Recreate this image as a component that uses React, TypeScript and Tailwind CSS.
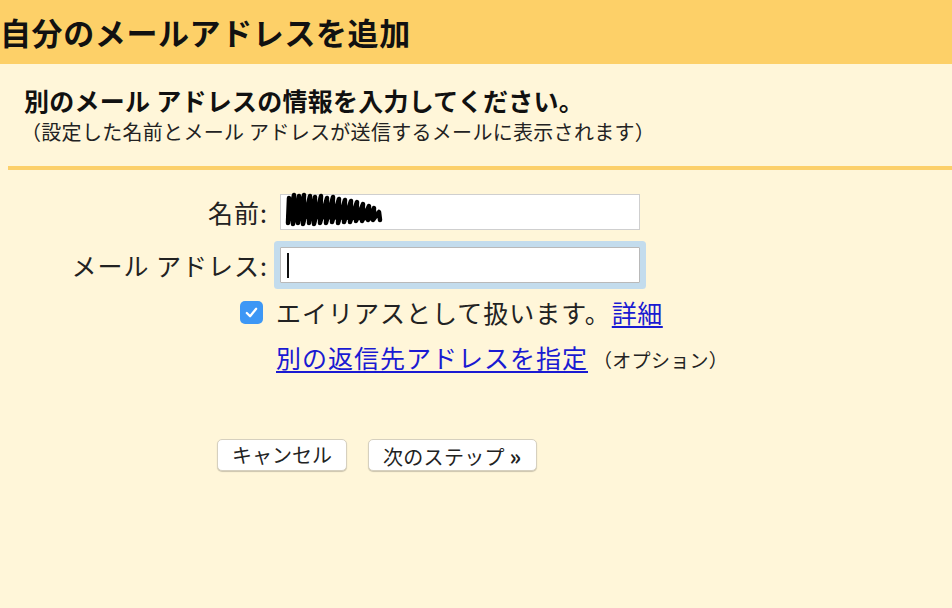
function Scribble() {
  return (
    <svg width="104" height="36" viewBox="0 0 104 36" className="absolute left-[3px] -top-[3px]">
      <path
        d="M5 6 L4 31 L10 3 L9 32 L15 4 L14 31 L20 3 L19 32 L26 4 L25 31 L31 5 L30 32 L37 4 L36 31 L43 6 L42 31 L49 5 L48 30 L55 7 L54 31 L61 8 L60 30 L67 9 L66 30 L73 10 L72 29 L79 12 L78 29 L85 14 L84 28 L90 16 L89 28 L95 20 L96 28"
        fill="none"
        stroke="#000"
        strokeWidth="4.5"
        strokeLinejoin="round"
        strokeLinecap="round"
      />
      <path d="M6 12 L90 20 M5 24 L88 26" stroke="#000" strokeWidth="5" strokeLinecap="round" />
    </svg>
  );
}

export default function App() {
  return (
    <div
      className="w-[952px] h-[608px] overflow-hidden bg-[#fff6d9] text-[#222]"
      style={{ fontFamily: '"Noto Sans CJK JP", "Noto Sans", sans-serif' }}
    >
      <header className="h-[64px] bg-[#fdd068] flex items-center">
        <h1 className="text-[31px] font-bold leading-none tracking-[0.6px] text-[#111] pb-[2px]">
          自分のメールアドレスを追加
        </h1>
      </header>

      <div className="pt-[22px] pl-[24px]">
        <h2 className="text-[25px] font-bold leading-[28px] tracking-[0.25px] text-[#111]">
          別のメール アドレスの情報を入力してください。
        </h2>
        <p className="text-[20px] leading-[24px] tracking-[0.3px] -ml-[3px] mt-[6px]">
          （設定した名前とメール アドレスが送信するメールに表示されます）
        </p>
      </div>

      <div className="ml-[8px] mt-[22px] h-[4px] bg-[#fcd06a]" />

      <div className="grid grid-cols-[268px_360px] gap-x-[12px] gap-y-[17px] items-center mt-[24px]">
        <label className="text-right text-[25px] leading-none tracking-[1px]">名前:</label>
        <div className="relative h-[36px] bg-white border border-[#cfcfcf]">
          <Scribble />
        </div>

        <label className="text-right text-[25px] leading-none tracking-[1px]">メール アドレス:</label>
        <div className="h-[36px] bg-white border border-[#b9b9b9] rounded-[1px] shadow-[0_0_0_6px_#c3dced] flex items-center pl-[6px]">
          <span className="w-[2px] h-[25px] bg-[#111]" />
        </div>
      </div>

      <div className="flex items-center mt-[17px] ml-[240px]">
        <span className="w-[23px] h-[23px] rounded-[5px] bg-[#3d97f5] flex items-center justify-center">
          <svg width="15" height="15" viewBox="0 0 16 16">
            <path d="M3 8.5 L6.5 12 L13 4" fill="none" stroke="#fff" strokeWidth="2.4" strokeLinecap="round" strokeLinejoin="round" />
          </svg>
        </span>
        <span className="ml-[13px] text-[25px] leading-none tracking-[1px]">エイリアスとして扱います。</span>
        <a href="#" className="ml-[1px] text-[25px] leading-none tracking-[0.5px] text-[#1a1ad2] underline underline-offset-[3px] decoration-[1.5px]">
          詳細
        </a>
      </div>

      <div className="flex items-end mt-[20px] ml-[276px]">
        <a href="#" className="text-[25px] leading-none tracking-[1px] text-[#1a1ad2] underline underline-offset-[3px] decoration-[1.5px]">
          別の返信先アドレスを指定
        </a>
        <span className="ml-[5px] text-[19px] leading-none tracking-[0.3px] pb-[1px]">（オプション）</span>
      </div>

      <div className="flex gap-[21px] mt-[69px] ml-[217px]">
        <button className="h-[32px] px-[14px] bg-white rounded-[5px] border border-[#d6d0bf] shadow-[0_1px_1px_rgba(0,0,0,0.2)] text-[20px] leading-none">
          キャンセル
        </button>
        <button className="h-[32px] px-[14px] bg-white rounded-[5px] border border-[#d6d0bf] shadow-[0_1px_1px_rgba(0,0,0,0.2)] text-[20px] leading-none tracking-[0.3px]">
          次のステップ <span className="font-bold text-[22px]">»</span>
        </button>
      </div>
    </div>
  );
}
